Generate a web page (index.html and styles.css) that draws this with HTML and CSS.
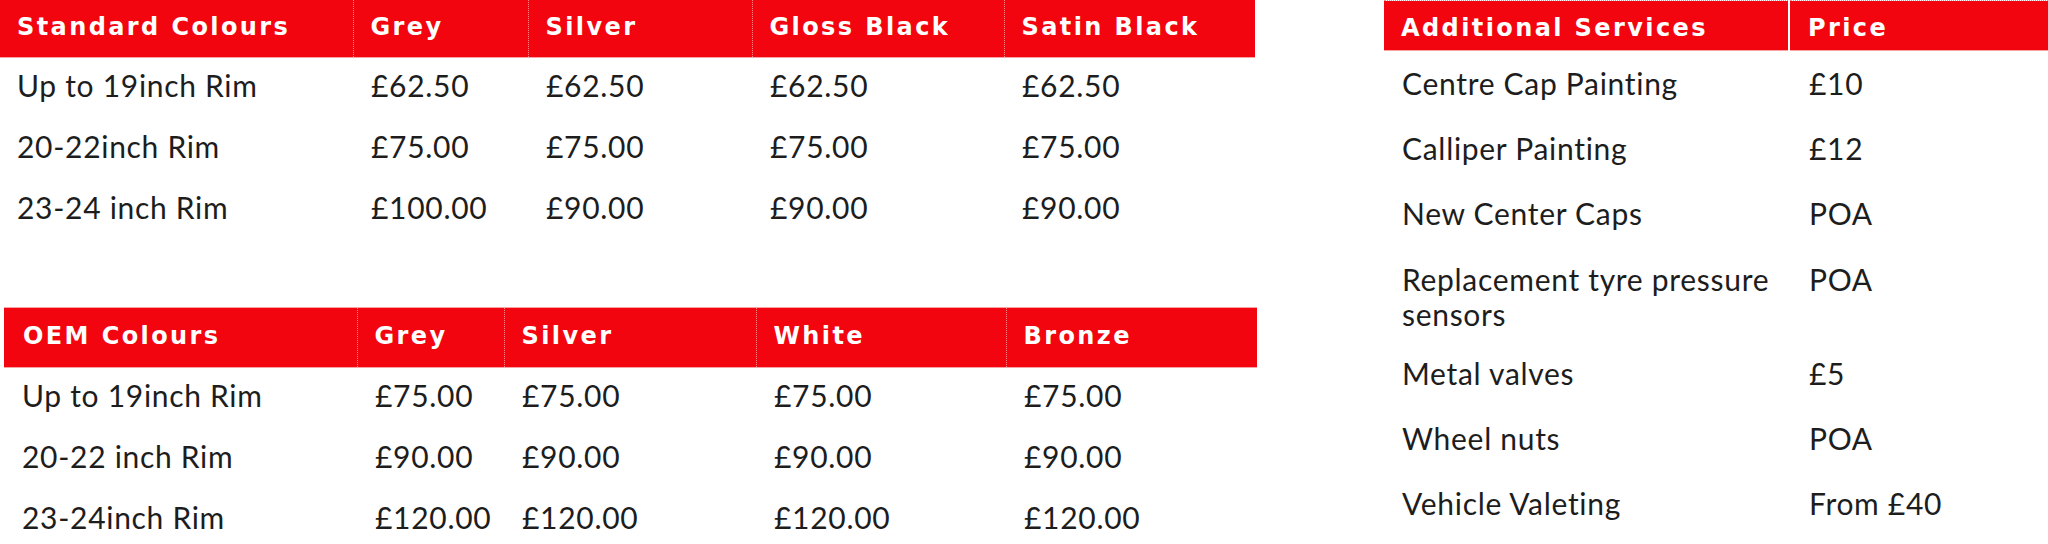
FILE: index.html
```html
<!DOCTYPE html>
<html lang="en">
<head>
<meta charset="utf-8">
<title>Wheel Refurbishment Prices</title>
<link rel="stylesheet" href="styles.css">
</head>
<body>
<div class="page">
  <div class="left">
    <table class="price-table std">
      <colgroup>
        <col class="c1"><col class="c2"><col class="c3"><col class="c4"><col class="c5">
      </colgroup>
      <thead>
        <tr><th>Standard Colours</th><th>Grey</th><th>Silver</th><th>Gloss Black</th><th>Satin Black</th></tr>
      </thead>
      <tbody>
        <tr><td>Up to 19inch Rim</td><td>£62.50</td><td>£62.50</td><td>£62.50</td><td>£62.50</td></tr>
        <tr><td>20-22inch Rim</td><td>£75.00</td><td>£75.00</td><td>£75.00</td><td>£75.00</td></tr>
        <tr><td>23-24 inch Rim</td><td>£100.00</td><td>£90.00</td><td>£90.00</td><td>£90.00</td></tr>
      </tbody>
    </table>

    <table class="price-table oem">
      <colgroup>
        <col class="c1"><col class="c2"><col class="c3"><col class="c4"><col class="c5">
      </colgroup>
      <thead>
        <tr><th>OEM Colours</th><th>Grey</th><th>Silver</th><th>White</th><th>Bronze</th></tr>
      </thead>
      <tbody>
        <tr><td>Up to 19inch Rim</td><td>£75.00</td><td>£75.00</td><td>£75.00</td><td>£75.00</td></tr>
        <tr><td>20-22 inch Rim</td><td>£90.00</td><td>£90.00</td><td>£90.00</td><td>£90.00</td></tr>
        <tr><td>23-24inch Rim</td><td>£120.00</td><td>£120.00</td><td>£120.00</td><td>£120.00</td></tr>
      </tbody>
    </table>
  </div>

  <div class="right">
    <table class="price-table extras">
      <colgroup>
        <col class="c1"><col class="c2">
      </colgroup>
      <thead>
        <tr><th>Additional Services</th><th>Price</th></tr>
      </thead>
      <tbody>
        <tr><td>Centre Cap Painting</td><td>£10</td></tr>
        <tr><td>Calliper Painting</td><td>£12</td></tr>
        <tr><td>New Center Caps</td><td>POA</td></tr>
        <tr class="wrap"><td>Replacement tyre pressure sensors</td><td>POA</td></tr>
        <tr><td>Metal valves</td><td>£5</td></tr>
        <tr><td>Wheel nuts</td><td>POA</td></tr>
        <tr><td>Vehicle Valeting</td><td>From £40</td></tr>
      </tbody>
    </table>
  </div>
</div>
</body>
</html>
```

FILE: styles.css
```css
html, body {
  margin: 0;
  padding: 0;
  background: #ffffff;
}

body {
  width: 2048px;
  height: 544px;
  overflow: hidden;
  font-family: Lato, "Liberation Sans", sans-serif;
  color: #1d1d1d;
}

.page {
  display: flex;
  align-items: flex-start;
}

.left {
  width: 1257px;
  display: flex;
  flex-direction: column;
}

.right {
  margin-left: 127px;
  flex: 1;
}

.price-table {
  border-collapse: collapse;
  table-layout: fixed;
}

.price-table th {
  background: #f2050e;
  color: #ffffff;
  font-family: "DejaVu Sans", Verdana, sans-serif;
  font-weight: bold;
  font-size: 24px;
  line-height: 28px;
  letter-spacing: 2.4px;
  text-align: left;
  padding: 0 6px 0 17px;
  border-bottom: 1px solid #f7a3a3;
  border-left: 1px dotted #f68d8d;
  white-space: nowrap;
}

.price-table th:first-child {
  border-left: none;
}

.price-table td {
  font-size: 30px;
  line-height: 34px;
  letter-spacing: 0.7px;
  text-align: left;
  vertical-align: top;
  padding: 10px 6px 17px 18px;
}

/* Standard colours */
.std {
  width: 1255px;
}
.std th {
  padding-top: 13px;
  padding-bottom: 16px;
}
.std td:first-child {
  padding-left: 17px;
}
.std .c1 { width: 353px; }
.std .c2 { width: 175px; }
.std .c3 { width: 224px; }
.std .c4 { width: 252px; }
.std .c5 { width: 251px; }

/* OEM colours */
.oem {
  width: 1253px;
  margin-top: 66px;
  margin-left: 4px;
}
.oem th {
  padding-top: 14px;
  padding-bottom: 17px;
  border-top: 1px solid #f7a3a3;
}
.oem th:first-child {
  padding-left: 19px;
}
.oem .c1 { width: 353px; }
.oem .c2 { width: 147px; }
.oem .c3 { width: 252px; }
.oem .c4 { width: 250px; }
.oem .c5 { width: 251px; }

/* Additional services */
.extras {
  width: 664px;
}
.extras th {
  padding-top: 13px;
  padding-bottom: 8px;
  border-top: 1px dotted #f68d8d;
}
.extras th + th {
  border-left: 2px solid #ffffff;
  padding-left: 18px;
}
.extras td {
  line-height: 35px;
  padding-top: 15px;
  padding-bottom: 15px;
}
.extras td + td {
  padding-left: 20px;
}
.extras .wrap td {
  padding-top: 16px;
  padding-bottom: 9px;
}
.extras .c1 { width: 405px; }
.extras .c2 { width: 259px; }
```
